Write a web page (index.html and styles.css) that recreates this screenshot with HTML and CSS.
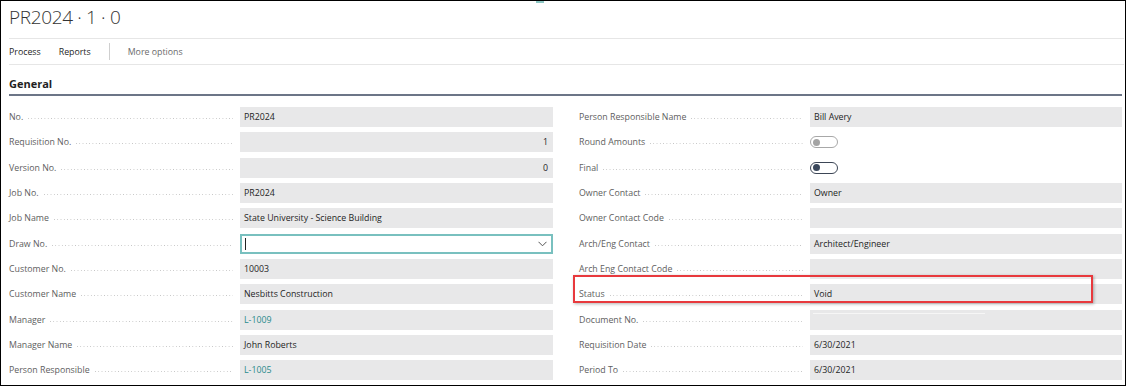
FILE: index.html
```html
<!DOCTYPE html>
<html lang="en">
<head>
<meta charset="utf-8">
<title>PR2024 · 1 · 0</title>
<link rel="stylesheet" href="styles.css">
</head>
<body>
<div class="frame">
  <div class="progress"></div>
  <header class="title">PR2024 · 1 · 0</header>
  <nav class="actions">
    <span class="act">Process</span>
    <span class="act">Reports</span>
    <span class="sep"></span>
    <span class="act more">More options</span>
  </nav>
  <section class="group">
    <h2 class="group-title">General</h2>
    <div class="cols">
      <div class="col">
        <div class="row"><span class="lbl"><span>No.</span></span><div class="val">PR2024</div></div>
        <div class="row"><span class="lbl"><span>Requisition No.</span></span><div class="val num">1</div></div>
        <div class="row"><span class="lbl"><span>Version No.</span></span><div class="val num">0</div></div>
        <div class="row"><span class="lbl"><span>Job No.</span></span><div class="val">PR2024</div></div>
        <div class="row"><span class="lbl"><span>Job Name</span></span><div class="val">State University - Science Building</div></div>
        <div class="row"><span class="lbl"><span>Draw No.</span></span>
          <div class="val input"><span class="caret"></span>
            <svg class="chev" width="9" height="6" viewBox="0 0 9 6"><polyline points="0.5,0.8 4.5,4.8 8.5,0.8" fill="none" stroke="#555" stroke-width="1"/></svg>
          </div>
        </div>
        <div class="row"><span class="lbl"><span>Customer No.</span></span><div class="val">10003</div></div>
        <div class="row"><span class="lbl"><span>Customer Name</span></span><div class="val">Nesbitts Construction</div></div>
        <div class="row"><span class="lbl"><span>Manager</span></span><div class="val link">L-1009</div></div>
        <div class="row"><span class="lbl"><span>Manager Name</span></span><div class="val">John Roberts</div></div>
        <div class="row"><span class="lbl"><span>Person Responsible</span></span><div class="val link">L-1005</div></div>
      </div>
      <div class="col right">
        <div class="row"><span class="lbl"><span>Person Responsible Name</span></span><div class="val">Bill Avery</div></div>
        <div class="row"><span class="lbl"><span>Round Amounts</span></span><div class="tog-cell"><span class="toggle off"></span></div></div>
        <div class="row"><span class="lbl"><span>Final</span></span><div class="tog-cell"><span class="toggle dark"></span></div></div>
        <div class="row"><span class="lbl"><span>Owner Contact</span></span><div class="val">Owner</div></div>
        <div class="row"><span class="lbl"><span>Owner Contact Code</span></span><div class="val"></div></div>
        <div class="row"><span class="lbl"><span>Arch/Eng Contact</span></span><div class="val">Architect/Engineer</div></div>
        <div class="row"><span class="lbl"><span>Arch Eng Contact Code</span></span><div class="val"></div></div>
        <div class="row"><span class="lbl"><span>Status</span></span><div class="val">Void</div></div>
        <div class="row"><span class="lbl"><span>Document No.</span></span><div class="val doc"></div></div>
        <div class="row"><span class="lbl"><span>Requisition Date</span></span><div class="val">6/30/2021</div></div>
        <div class="row"><span class="lbl"><span>Period To</span></span><div class="val">6/30/2021</div></div>
        <div class="highlight"></div>
      </div>
    </div>
  </section>
</div>
</body>
</html>
```
FILE: styles.css
```css
* { box-sizing: border-box; }
html, body { margin: 0; padding: 0; background: #fff; }
body {
  font-family: "Open Sans", "Noto Sans", sans-serif;
  font-size: 8.8px;
  color: #1e1e1e;
}
.frame {
  position: relative;
  width: 1126px;
  height: 386px;
  border: 1px solid #000;
  overflow: hidden;
  padding: 0 3px 0 8px;
}
.progress {
  position: absolute;
  left: 535px;
  top: 0;
  width: 8px;
  height: 2px;
  background: #8cc7c4;
}
.title {
  height: 38px;
  padding-top: 3px;
  line-height: 26px;
  font-size: 19px;
  font-weight: 300;
  letter-spacing: -0.35px;
  color: #333;
  border-bottom: 1px solid #e6e6e6;
  margin-right: -2px;
}
.actions {
  display: flex;
  align-items: center;
  gap: 18px;
  height: 26px;
  border-bottom: 1px solid #e6e6e6;
  margin-right: -2px;
  color: #262626;
}
.sep {
  width: 1px;
  height: 17px;
  background: #cfcfcf;
}
.more { color: #6b6b6b; }
.group-title {
  margin: 0;
  padding: 11px 0 2px;
  line-height: 16px;
  font-size: 11px;
  font-weight: 700;
  color: #1f1f1f;
  border-bottom: 2px solid #6c7587;
}
.cols {
  display: grid;
  grid-template-columns: 544px 543px;
  column-gap: 26px;
  margin-top: 11px;
}
.col {
  display: grid;
  grid-auto-rows: 20px;
  row-gap: 5.35px;
}
.right { position: relative; }
.row {
  display: grid;
  grid-template-columns: 231px 1fr;
  align-items: center;
}
.lbl {
  display: flex;
  align-items: center;
  color: #5e5e5e;
  white-space: nowrap;
  line-height: 20px;
}
.lbl::after {
  content: "";
  flex: 1;
  height: 1px;
  margin: 3px 7px 0 5px;
  background-image: linear-gradient(to right, #c4c4c4 1px, transparent 1px);
  background-size: 3.3px 1px;
}
.val {
  position: relative;
  height: 20px;
  line-height: 20px;
  padding: 0 5px 0 4px;
  background: #e8e8e9;
  white-space: nowrap;
}
.num { text-align: right; }
.link { color: #2a8b8c; }
.input {
  background: #fff;
  border: 2px solid #79c0bf;
  display: flex;
  align-items: center;
  justify-content: space-between;
  padding: 0 4px 0 3px;
}
.caret {
  width: 1px;
  height: 12px;
  background: #222;
}
.chev { display: block; }
.doc::before {
  content: "";
  position: absolute;
  left: 3px;
  top: 3px;
  width: 172px;
  height: 1px;
  background: #f6f6f6;
}
.tog-cell {
  display: flex;
  align-items: center;
  height: 20px;
}
.toggle {
  position: relative;
  width: 28px;
  height: 12px;
  border-radius: 6px;
  border: 1px solid #a8a8a8;
  background: #fff;
}
.toggle::before {
  content: "";
  position: absolute;
  left: 2px;
  top: 1.5px;
  width: 7px;
  height: 7px;
  border-radius: 50%;
  background: #a4a4a4;
}
.toggle.dark { border-color: #3d4656; }
.toggle.dark::before { background: #3b485c; }
.highlight {
  position: absolute;
  left: -6px;
  top: 168px;
  width: 520px;
  height: 28px;
  border: 2px solid #e8393d;
  box-shadow: 1px 1px 3px rgba(0, 0, 0, 0.3);
  pointer-events: none;
}
```
